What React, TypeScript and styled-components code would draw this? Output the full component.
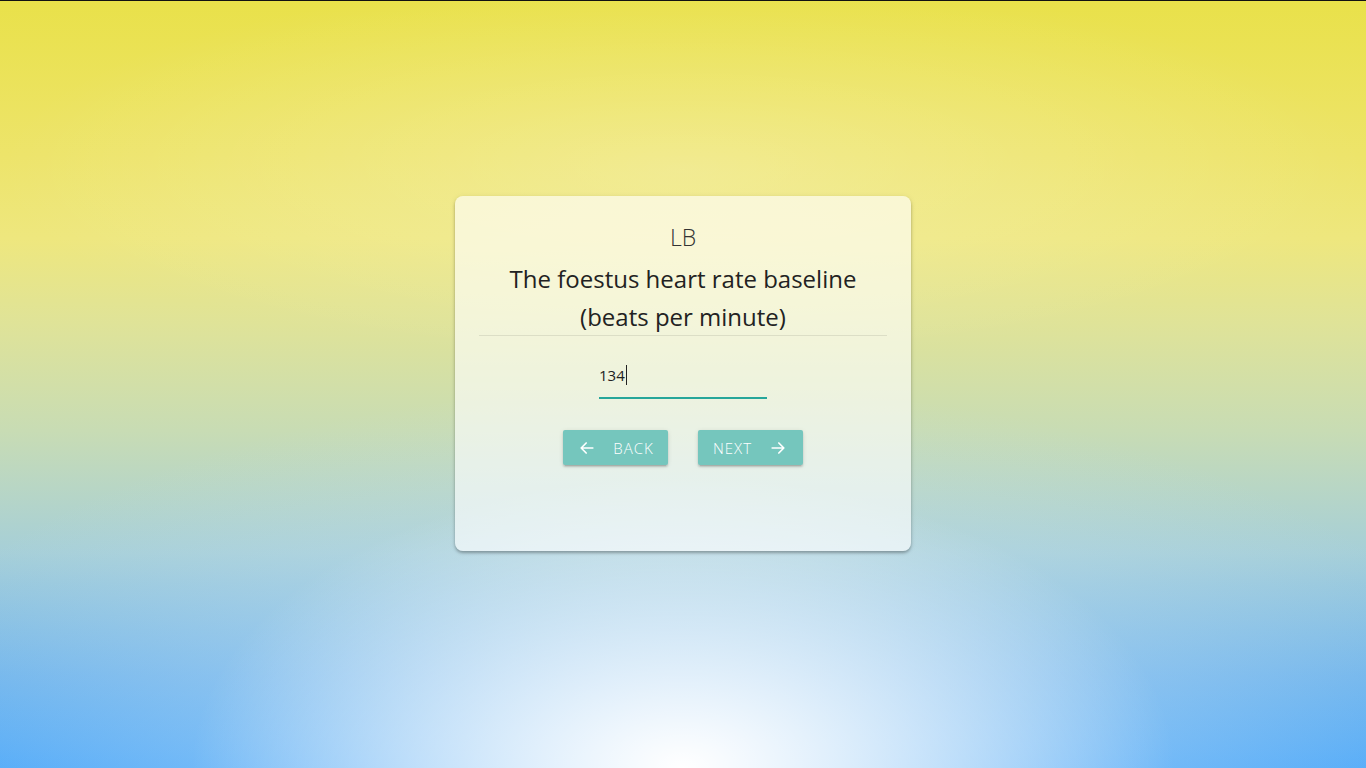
import React from "react";
import styled, { createGlobalStyle } from "styled-components";

const Global = createGlobalStyle`
  html, body { margin: 0; padding: 0; height: 100%; }
  body { font-family: "Open Sans", "Noto Sans", sans-serif; overflow: hidden; }
  #root { height: 100%; }
`;

const Page = styled.div`
  box-sizing: border-box;
  height: 768px;
  width: 100%;
  border-top: 1px solid #111;
  display: flex;
  justify-content: center;
  align-items: flex-start;
  padding-top: 195px;
  background:
    radial-gradient(ellipse 36% 38% at 50% 100%, rgba(255,255,255,1) 0%, rgba(255,255,255,0.6) 40%, rgba(255,255,255,0) 100%),
    radial-gradient(ellipse 62% 50% at 50% 100%, rgba(200,225,245,0.75) 0%, rgba(200,225,245,0) 100%),
    radial-gradient(ellipse 50% 25% at 50% 22%, rgba(255,255,255,0.25) 0%, rgba(255,255,255,0) 100%),
    linear-gradient(to bottom, #e9e14a 0%, #ede46a 20%, #eee77e 31%, #dfe398 42%, #c8dcb4 56%, #a6cfd8 72%, #6eb4ec 88%, #48a6f9 100%);
`;

const Card = styled.div`
  box-sizing: border-box;
  width: 456px;
  height: 355px;
  background: rgba(255, 255, 255, 0.62);
  border-radius: 8px;
  box-shadow: 0 2px 3px rgba(0, 0, 0, 0.28), 0 1px 6px rgba(0, 0, 0, 0.08);
  padding: 25px 24px 0;
  display: flex;
  flex-direction: column;
  align-items: center;
`;

const Code = styled.div`
  font-family: "Open Sans", sans-serif;
  font-weight: 300;
  font-size: 23px;
  line-height: 32px;
  color: #333;
`;

const Question = styled.h2`
  margin: 7px 0 0;
  font-family: "Open Sans", sans-serif;
  font-weight: 400;
  font-size: 24px;
  line-height: 38px;
  color: #222;
  text-align: center;
`;

const Divider = styled.hr`
  width: 100%;
  margin: -1px 0 0;
  border: none;
  border-top: 1px solid rgba(0, 0, 0, 0.09);
`;

const Field = styled.div`
  margin-top: 28px;
  width: 168px;
  border-bottom: 2px solid #26a69a;
  padding-bottom: 11px;
  display: flex;
  align-items: center;
`;

const Value = styled.span`
  font-family: "Open Sans", sans-serif;
  font-size: 15px;
  line-height: 22px;
  color: #222;
`;

const Caret = styled.span`
  display: inline-block;
  width: 1px;
  height: 20px;
  background: #222;
  margin-left: 1px;
`;

const Buttons = styled.div`
  margin-top: 31px;
  display: flex;
  gap: 30px;
`;

const Button = styled.button`
  box-sizing: border-box;
  width: 105px;
  height: 35px;
  border: none;
  border-radius: 2px;
  background: #75c6bd;
  color: #fff;
  font-family: "Open Sans", sans-serif;
  font-weight: 300;
  font-size: 15px;
  letter-spacing: 1px;
  text-transform: uppercase;
  display: flex;
  align-items: center;
  justify-content: center;
  gap: 16px;
  box-shadow: 0 2px 2px rgba(0, 0, 0, 0.14), 0 1px 5px rgba(0, 0, 0, 0.1), 0 3px 1px -2px rgba(0, 0, 0, 0.1);
  padding: 0;
  cursor: pointer;
`;

const Arrow = ({ dir }: { dir: "left" | "right" }) => (
  <svg width="20" height="20" viewBox="0 0 24 24" fill="none" stroke="#fff" strokeWidth="2" strokeLinecap="round" strokeLinejoin="round">
    {dir === "left" ? (
      <path d="M19 12H5M11 6l-6 6 6 6" />
    ) : (
      <path d="M5 12h14M13 6l6 6-6 6" />
    )}
  </svg>
);

export default function App() {
  return (
    <>
      <Global />
      <Page>
        <Card>
          <Code>LB</Code>
          <Question>
            The foestus heart rate baseline
            <br />
            (beats per minute)
          </Question>
          <Divider />
          <Field>
            <Value>134</Value>
            <Caret />
          </Field>
          <Buttons>
            <Button>
              <Arrow dir="left" />
              Back
            </Button>
            <Button>
              Next
              <Arrow dir="right" />
            </Button>
          </Buttons>
        </Card>
      </Page>
    </>
  );
}
